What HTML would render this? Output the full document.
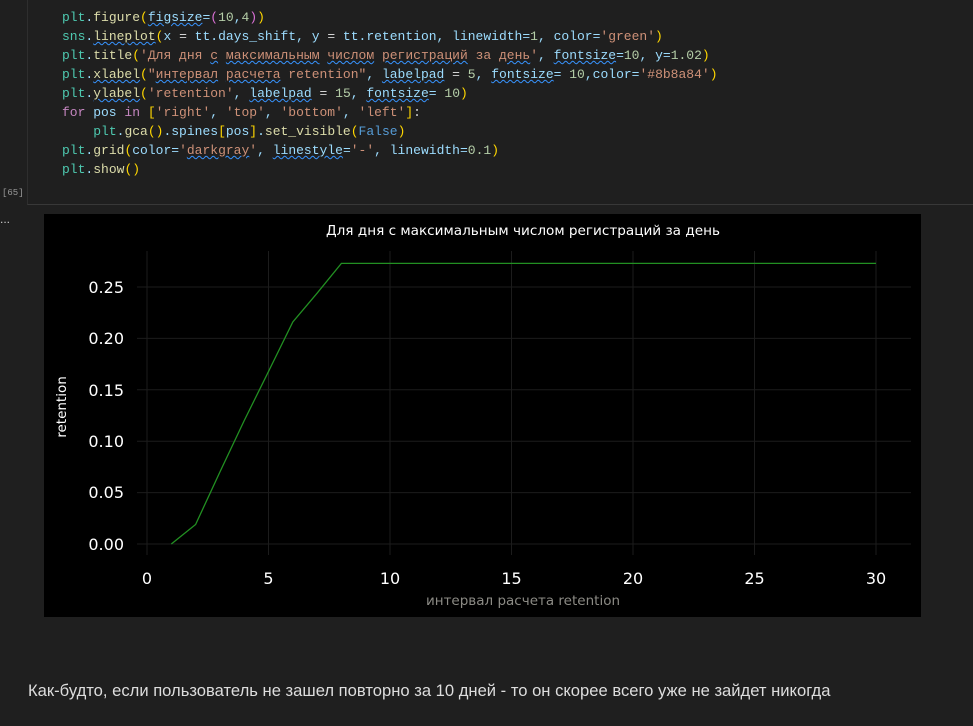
<!DOCTYPE html>
<html><head><meta charset="utf-8"><style>
body{margin:0;width:973px;height:726px;background:#1f1f1f;position:relative;overflow:hidden;font-family:"Liberation Sans",sans-serif}
.cell{position:absolute;left:27px;top:-2px;width:960px;height:206px;border-left:1px solid #2e2e2e;border-bottom:1px solid #383838;background:#1f1f1f}
pre{position:absolute;left:62px;top:8px;margin:0;font-family:"Liberation Mono",monospace;font-size:13px;line-height:19px;color:#9cdcfe;letter-spacing:0}
.f{color:#dcdcaa}.s{color:#ce9178}.n{color:#b5cea8}.k{color:#c586c0}.p{color:#ffd700}.q{color:#da70d6}.w{color:#d4d4d4}.c{color:#4ec9b0}.b{color:#569cd6}
.u{text-decoration:underline wavy #3794ff;text-decoration-thickness:1px}
.num{position:absolute;left:2px;top:188px;font-size:9px;color:#999;font-family:"Liberation Mono",monospace}
.dots{position:absolute;left:0;top:212px;color:#ccc;font-size:12px}
.txt{position:absolute;left:28px;top:681px;color:#ddd;font-size:16.6px}
</style></head><body>
<div class="cell"></div>
<div class="num">[65]</div>
<div class="dots">...</div>
<pre><span class="c">plt</span>.<span class="f">figure</span><span class="p">(</span><span class="u">figsize</span>=<span class="q">(</span><span class="n">10</span>,<span class="n">4</span><span class="q">)</span><span class="p">)</span>
<span class="c">sns</span>.<span class="f u">lineplot</span><span class="p">(</span>x <span class="w">=</span> tt.days_shift, y <span class="w">=</span> tt.retention, linewidth=<span class="n">1</span>, color=<span class="s">'green'</span><span class="p">)</span>
<span class="c">plt</span>.<span class="f">title</span><span class="p">(</span><span class="s">'Для дня <span class="u">с</span> <span class="u">максимальным</span> <span class="u">числом</span> <span class="u">регистраций</span> за <span class="u">день</span>'</span>, <span class="u">fontsize</span>=<span class="n">10</span>, y=<span class="n">1.02</span><span class="p">)</span>
<span class="c">plt</span>.<span class="f u">xlabel</span><span class="p">(</span><span class="s">"<span class="u">интервал</span> <span class="u">расчета</span> retention"</span>, <span class="u">labelpad</span> <span class="w">=</span> <span class="n">5</span>, <span class="u">fontsize</span>= <span class="n">10</span>,color=<span class="s">'#8b8a84'</span><span class="p">)</span>
<span class="c">plt</span>.<span class="f u">ylabel</span><span class="p">(</span><span class="s">'retention'</span>, <span class="u">labelpad</span> <span class="w">=</span> <span class="n">15</span>, <span class="u">fontsize</span>= <span class="n">10</span><span class="p">)</span>
<span class="k">for</span> pos <span class="k">in</span> <span class="p">[</span><span class="s">'right'</span>, <span class="s">'top'</span>, <span class="s">'bottom'</span>, <span class="s">'left'</span><span class="p">]</span><span class="w">:</span>
    <span class="c">plt</span>.<span class="f">gca</span><span class="p">()</span>.spines<span class="p">[</span>pos<span class="p">]</span>.<span class="f">set_visible</span><span class="p">(</span><span class="b">False</span><span class="p">)</span>
<span class="c">plt</span>.<span class="f">grid</span><span class="p">(</span>color=<span class="s">'<span class="u">darkgray</span>'</span>, <span class="u">linestyle</span>=<span class="s">'-'</span>, linewidth=<span class="n">0.1</span><span class="p">)</span>
<span class="c">plt</span>.<span class="f">show</span><span class="p">()</span></pre>
<svg style="position:absolute;left:44px;top:214px" width="877" height="403" viewBox="44 214 877 403" font-family="DejaVu Sans, Liberation Sans, sans-serif">
<rect x="44" y="214" width="877" height="403" fill="#000"/>
<g stroke="#1c1c1c" stroke-width="1">
<line x1="147" y1="251" x2="147" y2="555"/><line x1="268.5" y1="251" x2="268.5" y2="555"/><line x1="390" y1="251" x2="390" y2="555"/><line x1="511.5" y1="251" x2="511.5" y2="555"/><line x1="633" y1="251" x2="633" y2="555"/><line x1="754.5" y1="251" x2="754.5" y2="555"/><line x1="876" y1="251" x2="876" y2="555"/>
<line x1="137" y1="544" x2="911" y2="544"/><line x1="137" y1="492.6" x2="911" y2="492.6"/><line x1="137" y1="441.2" x2="911" y2="441.2"/><line x1="137" y1="389.8" x2="911" y2="389.8"/><line x1="137" y1="338.4" x2="911" y2="338.4"/><line x1="137" y1="287" x2="911" y2="287"/>
</g>
<polyline fill="none" stroke="#229022" stroke-width="1.3" points="171.3,544 195.6,524.5 219.9,472 244.2,420.6 268.5,371.5 292.8,322 317.1,293.2 341.4,263.4 876,263.4"/>
<g fill="#fff" font-size="16" text-anchor="end">
<text x="124" y="293">0.25</text><text x="124" y="344">0.20</text><text x="124" y="396">0.15</text><text x="124" y="447">0.10</text><text x="124" y="498">0.05</text><text x="124" y="550">0.00</text>
</g>
<g fill="#fff" font-size="16" text-anchor="middle">
<text x="147" y="584">0</text><text x="268.5" y="584">5</text><text x="390" y="584">10</text><text x="511.5" y="584">15</text><text x="633" y="584">20</text><text x="754.5" y="584">25</text><text x="876" y="584">30</text>
</g>
<text x="523" y="235" fill="#fff" font-size="13.6" text-anchor="middle">Для дня с максимальным числом регистраций за день</text>
<text x="523" y="605" fill="#8b8a84" font-size="13.5" text-anchor="middle">интервал расчета retention</text>
<text transform="translate(66,407) rotate(-90)" fill="#fff" font-size="13.5" text-anchor="middle">retention</text>
</svg>
<div class="txt">Как-будто, если пользователь не зашел повторно за 10 дней - то он скорее всего уже не зайдет никогда</div>
</body></html>
